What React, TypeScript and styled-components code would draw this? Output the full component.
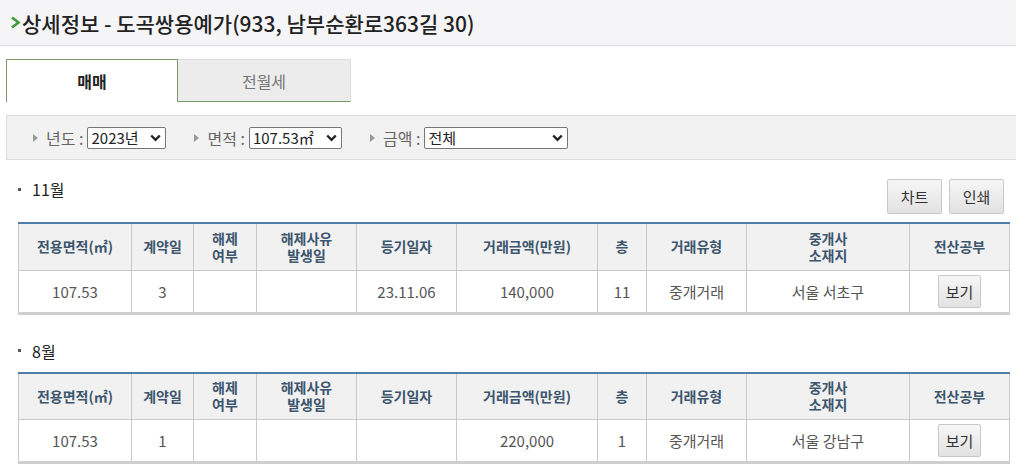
import React from "react";
import styled, { createGlobalStyle } from "styled-components";

const Global = createGlobalStyle`
  html, body { margin: 0; padding: 0; background: #fff; }
  body { font-family: "Noto Sans CJK KR", "Noto Sans", sans-serif; color: #333; }
  * { box-sizing: border-box; }
`;

const Page = styled.div`
  width: 1016px;
  overflow: hidden;
`;

const Header = styled.div`
  height: 46px;
  background: #f5f5f7;
  border-bottom: 1px solid #dcdcdc;
  display: flex;
  align-items: center;
  padding-left: 10px;
`;

const Title = styled.h1`
  margin: 0;
  font-size: 21px;
  font-weight: 500;
  color: #222;
  display: flex;
  align-items: center;
`;

const Tabs = styled.div`
  display: flex;
  margin: 13px 0 0 6px;
  height: 43px;
`;

const Tab = styled.div<{ $active?: boolean }>`
  width: ${(p) => (p.$active ? "172px" : "173px")};
  display: flex;
  align-items: center;
  justify-content: center;
  font-size: 16px;
  ${(p) =>
    p.$active
      ? `background:#fff;border-top:1px solid #7a9a6c;border-left:1px solid #7a9a6c;border-right:1px solid #7a9a6c;color:#222;font-weight:700;`
      : `background:#ececec;border-top:1px solid #dcdcdc;border-right:1px solid #dcdcdc;border-bottom:1px solid #7a9a6c;color:#777;`}
`;

const FilterBar = styled.div`
  margin: 13px 0 0 6px;
  height: 45px;
  background: #f2f2f2;
  border: 1px solid #dcdcdc;
  border-right: none;
  display: flex;
  align-items: center;
  padding-left: 26px;
`;

const Filter = styled.div`
  display: flex;
  align-items: center;
  margin-right: 28px;
  font-size: 16px;
  color: #666;
`;

const Tri = styled.span`
  width: 0;
  height: 0;
  border-top: 4px solid transparent;
  border-bottom: 4px solid transparent;
  border-left: 5px solid #999;
  margin-right: 8px;
`;

const SelectBox = styled.div<{ $w: number }>`
  width: ${(p) => p.$w}px;
  height: 22px;
  margin-left: 4px;
  border: 1px solid #767676;
  background: #fff;
  border-radius: 2px;
  display: flex;
  align-items: center;
  justify-content: space-between;
  padding: 0 4px 0 3px;
  font-size: 15px;
  color: #222;
  line-height: 1;
`;

const Chevron = () => (
  <svg width="11" height="8" viewBox="0 0 11 8">
    <path d="M1.2 1.5 L5.5 5.8 L9.8 1.5" fill="none" stroke="#222" strokeWidth="2.4" />
  </svg>
);

const Section = styled.section<{ $top: number }>`
  margin: ${(p) => p.$top}px 0 0 18px;
  width: 991px;
`;

const SectionHead = styled.div<{ $h: number }>`
  display: flex;
  align-items: flex-start;
  justify-content: space-between;
  height: ${(p) => p.$h}px;
`;

const MonthTitle = styled.div<{ $mt: number }>`
  display: flex;
  align-items: center;
  font-size: 16px;
  color: #222;
  line-height: 20px;
  margin-top: ${(p) => p.$mt}px;
`;

const Dot = styled.span`
  width: 3px;
  height: 3px;
  background: #555;
  margin-right: 11px;
`;

const Buttons = styled.div`
  display: flex;
  gap: 7px;
  margin-right: 5px;
`;

const Btn = styled.button<{ $w?: number; $h?: number }>`
  width: ${(p) => p.$w ?? 55}px;
  height: ${(p) => p.$h ?? 35}px;
  border: 1px solid #c8c8c8;
  border-radius: 2px;
  background: linear-gradient(#f6f6f6, #e2e2e2);
  font-family: inherit;
  font-size: 15px;
  color: #333;
  padding: 0;
  cursor: pointer;
`;

const Table = styled.table`
  width: 991px;
  border-collapse: collapse;
  table-layout: fixed;
  border-top: 2px solid #4e7ea8;
  border-bottom: 3px solid #cfcfcf;
`;

const Th = styled.th`
  background: #f1f1f1;
  border: 1px solid #c8c8c8;
  border-top: none;
  height: 47px;
  font-size: 14px;
  font-weight: 700;
  color: #3d566e;
  line-height: 17px;
  padding: 0;
  text-align: center;
`;

const Td = styled.td`
  border: 1px solid #c8c8c8;
  height: 43px;
  font-size: 15px;
  color: #555;
  text-align: center;
  padding: 0;
`;

const widths = [113, 62, 63, 100, 100, 141, 49, 100, 163, 100];
const heads: React.ReactNode[] = [
  "전용면적(㎡)",
  "계약일",
  <>해제<br />여부</>,
  <>해제사유<br />발생일</>,
  "등기일자",
  "거래금액(만원)",
  "층",
  "거래유형",
  <>중개사<br />소재지</>,
  "전산공부",
];

type Row = { area: string; day: string; reg: string; price: string; floor: string; type: string; loc: string };

const DealTable = ({ row }: { row: Row }) => (
  <Table>
    <colgroup>
      {widths.map((w, i) => (
        <col key={i} style={{ width: w }} />
      ))}
    </colgroup>
    <thead>
      <tr>
        {heads.map((h, i) => (
          <Th key={i}>{h}</Th>
        ))}
      </tr>
    </thead>
    <tbody>
      <tr>
        <Td>{row.area}</Td>
        <Td>{row.day}</Td>
        <Td></Td>
        <Td></Td>
        <Td>{row.reg}</Td>
        <Td>{row.price}</Td>
        <Td>{row.floor}</Td>
        <Td>{row.type}</Td>
        <Td>{row.loc}</Td>
        <Td>
          <Btn $w={43} $h={33}>보기</Btn>
        </Td>
      </tr>
    </tbody>
  </Table>
);

export default function App() {
  return (
    <Page>
      <Global />
      <Header>
        <Title>
          <svg width="11" height="13" viewBox="0 0 11 13" style={{ marginRight: 1 }}>
            <path d="M2 1.5 L8.5 6.5 L2 11.5" fill="none" stroke="#3a9a3a" strokeWidth="2.6" />
          </svg>
          상세정보 - 도곡쌍용예가(933, 남부순환로363길 30)
        </Title>
      </Header>
      <Tabs>
        <Tab $active>매매</Tab>
        <Tab>전월세</Tab>
      </Tabs>
      <FilterBar>
        <Filter>
          <Tri />년도 :
          <SelectBox $w={79}>2023년<Chevron /></SelectBox>
        </Filter>
        <Filter>
          <Tri />면적 :
          <SelectBox $w={93}>107.53㎡<Chevron /></SelectBox>
        </Filter>
        <Filter>
          <Tri />금액 :
          <SelectBox $w={144}>전체<Chevron /></SelectBox>
        </Filter>
      </FilterBar>
      <Section $top={19}>
        <SectionHead $h={43}>
          <MonthTitle $mt={0}><Dot />11월</MonthTitle>
          <Buttons>
            <Btn>차트</Btn>
            <Btn>인쇄</Btn>
          </Buttons>
        </SectionHead>
        <DealTable row={{ area: "107.53", day: "3", reg: "23.11.06", price: "140,000", floor: "11", type: "중개거래", loc: "서울 서초구" }} />
      </Section>
      <Section $top={28}>
        <SectionHead $h={29}>
          <MonthTitle $mt={-2}><Dot />8월</MonthTitle>
        </SectionHead>
        <DealTable row={{ area: "107.53", day: "1", reg: "", price: "220,000", floor: "1", type: "중개거래", loc: "서울 강남구" }} />
      </Section>
    </Page>
  );
}
